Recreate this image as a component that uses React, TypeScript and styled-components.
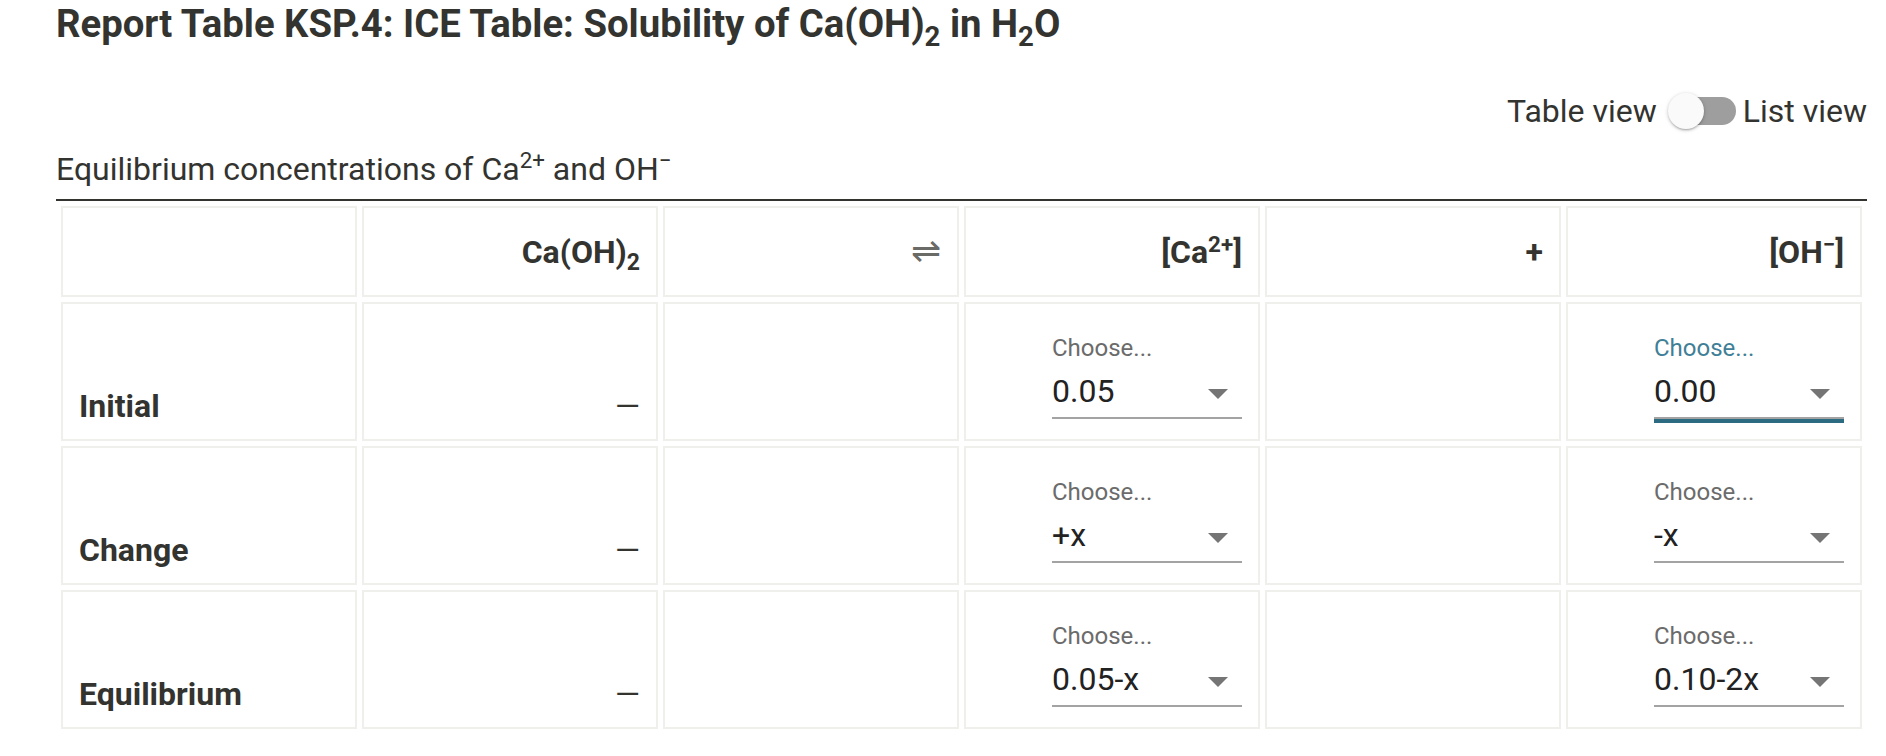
import React from "react";
import styled, { createGlobalStyle } from "styled-components";

const GlobalStyle = createGlobalStyle`
  html, body { margin: 0; padding: 0; background: #ffffff; }
  body {
    font-family: Roboto, "Noto Sans", "Liberation Sans", sans-serif;
    color: #333333;
    -webkit-font-smoothing: antialiased;
  }
`;

const Page = styled.div`
  width: 1811px;
  margin-left: 56px;
  padding-top: 2px;
`;

const Title = styled.h1`
  margin: 0;
  font-size: 38.3px;
  line-height: 44px;
  font-weight: 700;
  color: #333330;
  sub {
    font-size: 0.72em;
    line-height: 0;
    vertical-align: -0.32em;
  }
`;

const ToggleRow = styled.div`
  margin-top: 41px;
  display: flex;
  justify-content: flex-end;
  align-items: center;
  height: 48px;
`;

const ToggleLabel = styled.span`
  font-size: 32px;
  line-height: 48px;
  color: #333330;
`;

const SwitchBox = styled.span`
  position: relative;
  display: inline-block;
  width: 68px;
  height: 38px;
  margin: 0 7px 0 11px;
`;

const Track = styled.span`
  position: absolute;
  left: 5px;
  top: 5px;
  width: 63px;
  height: 28px;
  border-radius: 14px;
  background: #9e9e9e;
`;

const Thumb = styled.span`
  position: absolute;
  left: 0;
  top: 1px;
  width: 36px;
  height: 36px;
  border-radius: 50%;
  background: #fafafa;
  box-shadow: 0 2px 2px -1px rgba(0, 0, 0, 0.2), 0 1px 3px 0 rgba(0, 0, 0, 0.14),
    0 1px 5px 0 rgba(0, 0, 0, 0.12);
`;

const Caption = styled.div`
  margin-top: 10px;
  font-size: 32px;
  line-height: 48px;
  color: #333330;
  sup {
    font-size: 0.7em;
    line-height: 0;
    vertical-align: 0.55em;
  }
`;

const Table = styled.table`
  margin-top: 6px;
  width: 1811px;
  table-layout: fixed;
  border-collapse: separate;
  border-spacing: 5px;
  border-top: 2px solid #333330;
`;

const Cell = styled.td<{ $head?: boolean; $left?: boolean }>`
  box-sizing: border-box;
  border: 2px solid #efefeb;
  height: ${(p) => (p.$head ? "91px" : "139px")};
  padding: ${(p) => (p.$head ? "0 16px" : "0 16px 14px")};
  vertical-align: ${(p) => (p.$head ? "middle" : "bottom")};
  text-align: ${(p) => (p.$left ? "left" : "right")};
  font-size: 32px;
  line-height: 38px;
  color: #333330;
`;

const HeadText = styled.span`
  font-weight: 700;
  sup {
    font-size: 0.7em;
    line-height: 0;
    vertical-align: 0.5em;
  }
  sub {
    font-size: 0.72em;
    line-height: 0;
    vertical-align: -0.3em;
  }
`;

const Harpoons = styled.span`
  font-family: "DejaVu Sans", sans-serif;
  font-weight: 300;
  font-size: 36px;
  color: #6a6a66;
`;

const RowLabel = styled.span`
  font-weight: 700;
`;

const Dash = styled.span`
  font-weight: 400;
`;

const SelectBox = styled.div<{ $focused?: boolean }>`
  display: inline-flex;
  flex-direction: column;
  width: 190px;
  margin-bottom: 6px;
  text-align: left;
  position: relative;
  &::after {
    content: "";
    display: ${(p) => (p.$focused ? "block" : "none")};
    position: absolute;
    left: 0;
    right: 0;
    bottom: -4px;
    height: 4px;
    background: #2d6b83;
  }
`;

const SelectLabel = styled.span<{ $focused?: boolean }>`
  font-size: 24px;
  line-height: 24px;
  color: ${(p) => (p.$focused ? "#3f7f97" : "#6b6b6b")};
  margin-bottom: 11px;
`;

const SelectInput = styled.div`
  display: flex;
  align-items: center;
  justify-content: space-between;
  height: 40px;
  padding-bottom: 6px;
  border-bottom: 2px solid #a3a3a3;
`;

const SelectValue = styled.span`
  font-size: 32px;
  line-height: 40px;
  color: #222222;
`;

const Arrow = styled.svg`
  width: 48px;
  height: 48px;
  margin-right: 0;
  margin-top: 4px;
  fill: #757575;
`;

type SelectProps = { value: string; focused?: boolean };

const Select: React.FC<SelectProps> = ({ value, focused }) => (
  <SelectBox $focused={focused}>
    <SelectLabel $focused={focused}>Choose...</SelectLabel>
    <SelectInput>
      <SelectValue>{value}</SelectValue>
      <Arrow viewBox="0 0 24 24">
        <path d="M7 10l5 5 5-5z" />
      </Arrow>
    </SelectInput>
  </SelectBox>
);

const rows = [
  { label: "Initial", ca: "0.05", oh: "0.00", ohFocused: true },
  { label: "Change", ca: "+x", oh: "-x", ohFocused: false },
  { label: "Equilibrium", ca: "0.05-x", oh: "0.10-2x", ohFocused: false },
];

export default function App() {
  return (
    <>
      <GlobalStyle />
      <Page>
        <Title>
          Report Table KSP.4: ICE Table: Solubility of Ca(OH)<sub>2</sub> in H<sub>2</sub>O
        </Title>
        <ToggleRow>
          <ToggleLabel>Table view</ToggleLabel>
          <SwitchBox>
            <Track />
            <Thumb />
          </SwitchBox>
          <ToggleLabel>List view</ToggleLabel>
        </ToggleRow>
        <Caption>
          Equilibrium concentrations of Ca<sup>2+</sup> and OH<sup>−</sup>
        </Caption>
        <Table>
          <tbody>
            <tr>
              <Cell $head $left />
              <Cell $head>
                <HeadText>
                  Ca(OH)<sub>2</sub>
                </HeadText>
              </Cell>
              <Cell $head>
                <Harpoons>⇌</Harpoons>
              </Cell>
              <Cell $head>
                <HeadText>
                  [Ca<sup>2+</sup>]
                </HeadText>
              </Cell>
              <Cell $head>
                <HeadText>+</HeadText>
              </Cell>
              <Cell $head>
                <HeadText>
                  [OH<sup>−</sup>]
                </HeadText>
              </Cell>
            </tr>
            {rows.map((r) => (
              <tr key={r.label}>
                <Cell $left>
                  <RowLabel>{r.label}</RowLabel>
                </Cell>
                <Cell>
                  <Dash>—</Dash>
                </Cell>
                <Cell />
                <Cell>
                  <Select value={r.ca} />
                </Cell>
                <Cell />
                <Cell>
                  <Select value={r.oh} focused={r.ohFocused} />
                </Cell>
              </tr>
            ))}
          </tbody>
        </Table>
      </Page>
    </>
  );
}
